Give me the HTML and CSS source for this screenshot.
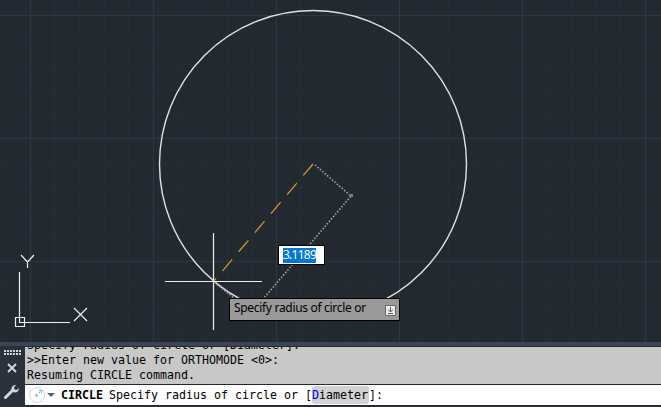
FILE: index.html
```html
<!DOCTYPE html>
<html lang="en">
<head>
<meta charset="utf-8">
<title>Drawing</title>
<link rel="stylesheet" href="styles.css">
</head>
<body>
<main class="app">
  <section class="canvas">
    <svg class="drawing" width="661" height="342" viewBox="0 0 661 342" fill="none">
      <defs>
        <pattern id="minor" x="30" y="15" width="123" height="123" patternUnits="userSpaceOnUse">
          <path d="M25 0v123M49.5 0v123M74.500 0v123M98.500 0v123M0 25h123M0 49.500h123M0 74.500h123M0 98.500h123" stroke="#262d38"/>
        </pattern>
        <pattern id="major" x="30" y="15" width="123" height="123" patternUnits="userSpaceOnUse">
          <path d="M.5 0v123M0 .5h123" stroke="#2f3747"/>
        </pattern>
      </defs>
      <rect width="661" height="342" fill="url(#minor)"/>
      <rect width="661" height="342" fill="url(#major)"/>
      <circle cx="313" cy="164" r="153.500" stroke="#e2e3e3" stroke-width="1.400"/>
      <path d="M313 164L213.500 281.500" stroke="#d5a021" stroke-width="1.200" stroke-dasharray="15 10"/>
      <path d="M315 165L351 196L252 312L215 283" stroke="#a4a7aa" stroke-width="1.600" stroke-dasharray="1.500 1.700"/>
      <path d="M349 194h4v3h-4z" fill="#777b80"/>
      <path d="M165 281.500h97M213.500 233v97" stroke="#eef1ec" stroke-width="1.200"/>
      <g stroke="#f0f0f0" stroke-width="1.200">
        <path d="M19.500 272v50.500H70M15.500 317.500h9v9h-9z"/>
        <path d="M21 255l6.500 7 6.500-7M27.500 262v6M74 308l13 13M87 308L74 321"/>
      </g>
    </svg>
    <div class="value-box"><span class="value">3.1189</span></div>
    <div class="prompt-tip">
      <span class="prompt-text">Specify radius of circle or</span>
      <svg class="down-key" width="11" height="11" viewBox="0 0 11 11" fill="none">
        <path d="M.5.5h10v10H.5z" fill="#eee" stroke="#666"/>
        <path d="M5.500 2v5M3 4.500L5.500 7 8 4.500M3 8.500h5" stroke="#555"/>
      </svg>
    </div>
  </section>
  <section class="command">
    <div class="rail">
      <svg width="25" height="60" viewBox="0 347 25 60" fill="none">
        <path d="M4 352h17M4 355h17" stroke="#d6d7d9" stroke-width="2" stroke-dasharray="2 1"/>
        <path d="M8 365l8 8M16 365l-8 8" stroke="#d3d5d6" stroke-width="2"/>
        <path d="M5.500 398.500L13 391" stroke="#d3d5d6" stroke-width="3" stroke-linecap="round"/>
        <path d="M16 386c-3 0-5 2-4.500 5l2.500 2.500c3 .5 5-1.500 5-4.500l-2.500 2-2-.500-.500-2z" fill="#d3d5d6"/>
      </svg>
    </div>
    <div class="console">
      <div class="history">
        <div class="line">Specify radius of circle or [Diameter]:</div>
        <div class="line">&gt;&gt;Enter new value for ORTHOMODE &lt;0&gt;:</div>
        <div class="line">Resuming CIRCLE command.</div>
      </div>
      <div class="entry">
        <svg class="tool" width="32" height="20" viewBox="25 385 32 20" fill="none">
          <circle cx="37" cy="395" r="7.500" stroke="#d2d4d5"/>
          <path d="M35.500 394.500h2v2h-2z" fill="#409bd5"/>
          <path d="M39 393l1-1M39 390.500h2.500v2.500" stroke="#52b5ef"/>
          <path d="M47 393h8l-4 4z" fill="#606060"/>
        </svg>
        <b class="name">CIRCLE</b>
        <span class="message">Specify radius of circle or [<span class="option"><span class="hotkey">D</span>iameter</span>]:</span>
      </div>
    </div>
  </section>
</main>
</body>
</html>
```
FILE: styles.css
```css
body {
  margin: 0;
  background: #222931;
}

.app {
  display: flex;
  flex-direction: column;
  width: 661px;
  height: 407px;
  overflow: hidden;
}

.canvas {
  position: relative;
  height: 342px;
  background: #222931;
}

.drawing {
  display: block;
}

.value-box,
.prompt-tip {
  position: absolute;
  box-sizing: border-box;
  display: flex;
  align-items: center;
  border: 1px solid #000;
  font-family: "Noto Sans", sans-serif;
  white-space: nowrap;
}

.value-box {
  left: 278px;
  top: 245px;
  width: 47px;
  height: 20px;
  padding-left: 4px;
  background: #fff;
}

.value {
  width: 33px;
  height: 15px;
  background: #0078d7;
  color: #fff;
  font-size: 12px;
  line-height: 14px;
  letter-spacing: -0.75px;
}

.prompt-tip {
  left: 229px;
  top: 298px;
  width: 171px;
  height: 23px;
  padding: 0 3px 0 4px;
  justify-content: space-between;
  background: #999;
}

.prompt-text {
  padding-bottom: 3px;
  color: #000;
  font-size: 12px;
  line-height: 18px;
  letter-spacing: -0.31px;
}

.down-key {
  margin-top: 2px;
}

.command {
  box-sizing: border-box;
  display: flex;
  height: 65px;
  border-top: 4px solid #3a4453;
  background: #2a303c;
}

.rail {
  width: 25px;
}

.console {
  flex: 1;
  border-top: 1px solid #222933;
  font-family: "DejaVu Sans Mono", monospace;
  font-size: 11.63px;
  color: #000;
}

.history {
  box-sizing: border-box;
  display: flex;
  flex-direction: column;
  justify-content: flex-end;
  height: 37px;
  padding: 0 0 1px 2px;
  overflow: hidden;
  background: #c8c8c8;
}

.line {
  flex: none;
  height: 15px;
  line-height: 15px;
  white-space: pre;
}

.entry {
  display: flex;
  align-items: center;
  height: 20px;
  border-top: 1px solid #222933;
  border-bottom: 1px solid #222933;
  background: #fff;
}

.name {
  margin-left: 4px;
  width: 48px;
}

.message {
  white-space: pre;
}

.option {
  padding: 2px 1px 2px 0;
  border-radius: 3px;
  background: #d2d2d2;
}

.hotkey {
  color: #00f;
}
```
